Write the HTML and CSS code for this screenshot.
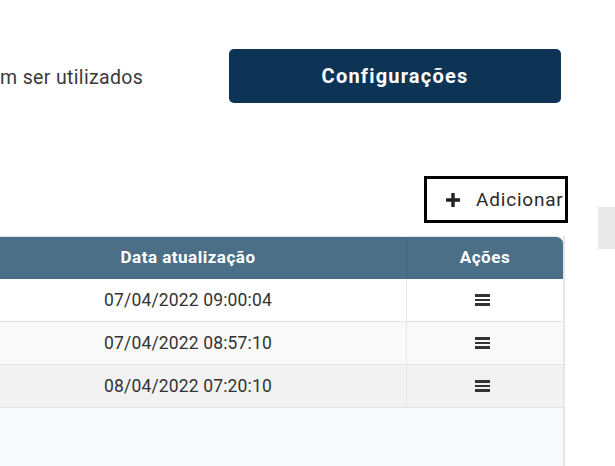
FILE: index.html
```html
<!DOCTYPE html>
<html lang="pt-BR">
<head>
<meta charset="utf-8">
<link rel="stylesheet" href="styles.css">
</head>
<body>
<div class="page">
  <div class="main">
    <div class="top">
      <p class="intro">m ser utilizados</p>
      <button class="btn-config">Configurações</button>
    </div>
    <div class="toolbar">
      <button class="btn-add">
        <svg class="plus" width="16" height="16" viewBox="0 0 16 16"><path d="M8 1v14M1 8h14" stroke="#222" stroke-width="3.4" fill="none"/></svg>
        <span>Adicionar</span>
      </button>
    </div>
    <div class="table">
      <div class="row head">
        <div class="cell c1">Data atualização</div>
        <div class="cell c2">Ações</div>
      </div>
      <div class="row r1">
        <div class="cell c1">07/04/2022 09:00:04</div>
        <div class="cell c2"><span class="menu"><i></i><i></i><i></i></span></div>
      </div>
      <div class="row r2">
        <div class="cell c1">07/04/2022 08:57:10</div>
        <div class="cell c2"><span class="menu"><i></i><i></i><i></i></span></div>
      </div>
      <div class="row r3">
        <div class="cell c1">08/04/2022 07:20:10</div>
        <div class="cell c2"><span class="menu"><i></i><i></i><i></i></span></div>
      </div>
      <div class="empty"></div>
    </div>
  </div>
  <div class="side"><div class="side-block"></div></div>
</div>
</body>
</html>
```

FILE: styles.css
```css
html, body {
  margin: 0;
  padding: 0;
  background: #fff;
  font-family: Roboto, "Liberation Sans", sans-serif;
  color: #333;
  overflow: hidden;
}
.page {
  display: flex;
  width: 615px;
  height: 466px;
  overflow: hidden;
}
.main {
  width: 568px;
  flex: none;
}
.top {
  display: flex;
  align-items: center;
  padding-top: 49px;
}
.intro {
  margin: 0;
  width: 229px;
  font-size: 19.5px;
  letter-spacing: 0.35px;
  color: #3a3a3a;
  padding-top: 2px;
}
.btn-config {
  width: 332px;
  height: 54px;
  border: none;
  border-radius: 5px;
  background: #0e3455;
  color: #fff;
  font-family: Roboto, "Liberation Sans", sans-serif;
  font-weight: 700;
  font-size: 20px;
  letter-spacing: 1.2px;
  padding: 0;
}
.toolbar {
  display: flex;
  justify-content: flex-end;
  margin-top: 73px;
}
.btn-add {
  display: flex;
  align-items: center;
  gap: 15px;
  height: 47px;
  width: 144px;
  box-sizing: border-box;
  border: 3px solid #000;
  background: #fff;
  padding: 0 0 0 18px;
  font-family: Roboto, "Liberation Sans", sans-serif;
  font-size: 19px;
  letter-spacing: 0.8px;
  color: #2b2b2b;
}
.table {
  margin-top: 13px;
  width: 565px;
  box-sizing: border-box;
  border-right: 2px solid #e6e6e6;
}
.row {
  display: flex;
  height: 43px;
  border-bottom: 1px solid #e2e2e2;
  box-sizing: border-box;
}
.cell {
  display: flex;
  align-items: center;
  justify-content: center;
  font-size: 17.5px;
  letter-spacing: 0.15px;
  color: #333;
}
.c1 {
  width: 407px;
  padding-right: 30px;
  box-sizing: border-box;
  border-right: 1px solid #e6e6e6;
}
.c2 {
  flex: 1;
}
.head {
  background: #4a6f87;
  border-top: 1px solid #dde3e7;
  border-top-right-radius: 7px;
  border-bottom: none;
}
.head .cell {
  color: #fff;
  font-weight: 700;
  font-size: 17px;
  letter-spacing: 0.5px;
  padding-bottom: 2px;
}
.head .c1 {
  border-right: 1px solid #41647b;
}
.r1 { background: #fff; }
.r2 { background: #f9f9f9; }
.r3 { background: #f2f2f2; }
.menu {
  display: flex;
  flex-direction: column;
  gap: 2px;
  margin-right: 5px;
}
.menu i {
  display: block;
  width: 15px;
  height: 2.5px;
  background: #333;
}
.empty {
  height: 80px;
  background: #f8f9fa;
}
.side {
  margin-left: 30px;
  padding-top: 207px;
  flex: 1;
}
.side-block {
  height: 42px;
  background: #e9e9e9;
}
```
